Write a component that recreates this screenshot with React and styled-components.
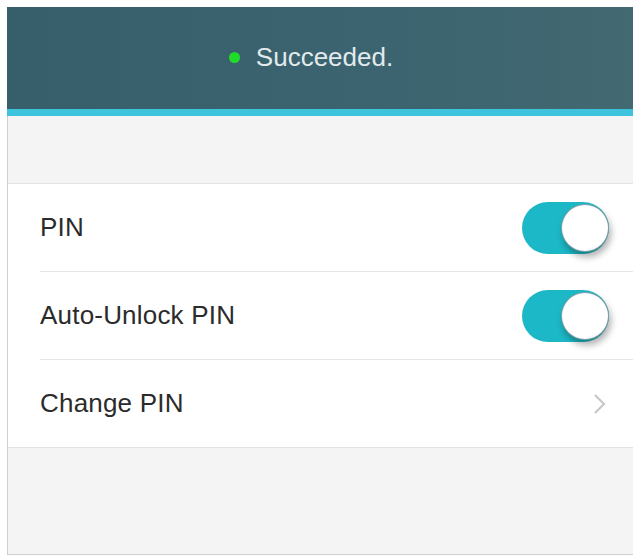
import React from "react";
import styled, { createGlobalStyle } from "styled-components";

const GlobalStyle = createGlobalStyle`
  body {
    margin: 7px;
    background: #fff;
    font-family: "Liberation Sans", Arial, sans-serif;
  }
`;

const Frame = styled.div`
  width: 628px;
  height: 548px;
  box-sizing: border-box;
  border: 1px solid #cfcfcf;
  border-top: none;
  background: #f4f4f4;
  display: flex;
  flex-direction: column;
`;

const Header = styled.div`
  height: 100px;
  margin: 0 -1px;
  background: linear-gradient(90deg, #365f6b 0%, #3b6470 60%, #436971 100%);
  border-bottom: 7px solid #3dc3db;
  display: flex;
  align-items: center;
  justify-content: center;
  gap: 16px;
  padding: 0 20px 2px 0;
`;

const Dot = styled.span`
  width: 11px;
  height: 11px;
  border-radius: 50%;
  background: #1fdc2a;
`;

const Status = styled.span`
  font-size: 26px;
  color: #e2eaec;
`;

const Spacer = styled.div`
  height: 67px;
`;

const List = styled.div`
  background: #fff;
  border-top: 1px solid #e2e2e2;
  border-bottom: 1px solid #e2e2e2;
`;

const Row = styled.div`
  height: 87px;
  margin-left: 32px;
  padding-right: 25px;
  display: flex;
  align-items: center;
  justify-content: space-between;
  border-bottom: ${(p) => (p.$last ? "none" : "1px solid #e6e6e6")};
`;

const Label = styled.span`
  font-size: 26px;
  color: #2b2b2b;
  letter-spacing: 0.2px;
`;

const Track = styled.div`
  position: relative;
  width: 87px;
  height: 52px;
  border-radius: 26px;
  background: #1db8c7;
`;

const Knob = styled.div`
  position: absolute;
  top: 2px;
  right: 0;
  width: 48px;
  height: 48px;
  box-sizing: border-box;
  border-radius: 50%;
  background: #fff;
  border: 1px solid rgba(20, 90, 100, 0.55);
  box-shadow: 2px 5px 7px rgba(0, 0, 0, 0.32);
`;

const Toggle = () => (
  <Track>
    <Knob />
  </Track>
);

const Chevron = () => (
  <svg width="14" height="22" viewBox="0 0 14 22" style={{ marginRight: 2 }}>
    <path d="M2 2 L11 11 L2 20" fill="none" stroke="#c7c7cc" strokeWidth="2.2" />
  </svg>
);

export default function App() {
  return (
    <>
      <GlobalStyle />
      <Frame>
        <Header>
          <Dot />
          <Status>Succeeded.</Status>
        </Header>
        <Spacer />
        <List>
          <Row>
            <Label>PIN</Label>
            <Toggle />
          </Row>
          <Row>
            <Label>Auto-Unlock PIN</Label>
            <Toggle />
          </Row>
          <Row $last>
            <Label>Change PIN</Label>
            <Chevron />
          </Row>
        </List>
      </Frame>
    </>
  );
}
